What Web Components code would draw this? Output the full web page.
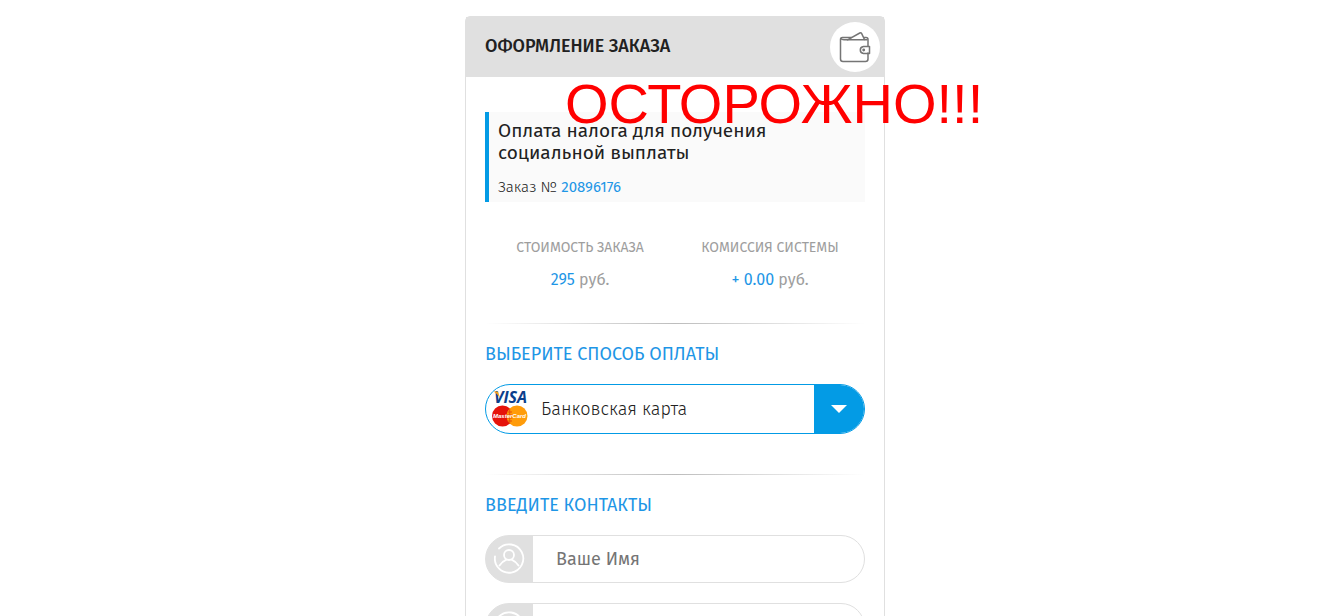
<!DOCTYPE html>
<html lang="ru">
<head>
<meta charset="utf-8">
<meta name="viewport" content="width=device-width, initial-scale=1">
<title>Оформление заказа</title>
<style>
    html, body { margin: 0; height: 100%; overflow: hidden; }
    body {
        box-sizing: border-box;
        padding-left: 24px;
        font-family: "Fira Sans", Roboto, "Noto Sans", sans-serif;
        color: #212121;
        background: #fff;
        --accent: #039be5;
        --link: #1e96e6;
        --line: #e0e0e0;
        --muted: #9e9e9e;
    }
</style>
</head>
<body>
<order-card heading="ОФОРМЛЕНИЕ ЗАКАЗА">
    <order-info number="20896176">Оплата налога для получения социальной выплаты</order-info>
    <order-totals>
        <order-sum caption="СТОИМОСТЬ ЗАКАЗА" value="295"></order-sum>
        <order-sum caption="КОМИССИЯ СИСТЕМЫ" value="+ 0.00"></order-sum>
    </order-totals>
    <soft-line></soft-line>
    <pay-method heading="ВЫБЕРИТЕ СПОСОБ ОПЛАТЫ"></pay-method>
    <soft-line></soft-line>
    <contact-form heading="ВВЕДИТЕ КОНТАКТЫ">
        <contact-field name="name" placeholder="Ваше Имя"></contact-field>
        <contact-field name="email" label="E-mail"></contact-field>
    </contact-form>
    <warning-note slot="over">ОСТОРОЖНО!!!</warning-note>
</order-card>

<script>
// every element fills its shadow root from render()
class BaseElement extends HTMLElement {
    constructor() {
        super();
        let template = document.createElement('template');
        template.innerHTML = this.render();
        this.attachShadow({mode: 'open'})
            .appendChild(template.content.cloneNode(true));
    }
    attr(name) {
        return this.getAttribute(name) || '';
    }
}

customElements.define('order-card',
class extends BaseElement {
    render() {
        return `
        <style>
            :host {
                display: block;
                position: relative;
                box-sizing: border-box;
                max-width: 420px;
                margin: 16px auto;
                border: 1px solid var(--line);
                border-radius: 5px;
            }
            header {
                display: flex;
                align-items: center;
                justify-content: space-between;
                box-sizing: border-box;
                height: 60px;
                padding: 0 4px 0 19px;
                background: var(--line);
            }
            h1 { margin: 0; padding-bottom: 2px; font-size: 18px; line-height: 24px; font-weight: 500; }
            .badge {
                display: flex;
                align-items: center;
                justify-content: center;
                width: 50px;
                height: 50px;
                border-radius: 50%;
                background: #fff;
            }
            main { padding: 35px 19px; }
        </style>
        <header>
            <h1>${this.attr('heading')}</h1>
            <span class="badge">
                <svg width="32" height="32" viewBox="0 0 32 32" fill="none" stroke="#757575" stroke-width="1.5" stroke-linejoin="round" stroke-linecap="round">
                    <path d="M29 15V8.500Q29 6.500 27 6.500H25M12.500 6.500H3.500Q1.500 6.500 1.500 8.500V28Q1.500 30.500 4 30.500H26.500Q29 30.500 29 28V22"/>
                    <path d="M2 7.500Q2.500 8.800 5 8.800H28"/>
                    <path d="M8.500 8.800L20.800 2Q22 1.400 22.700 2.700L25.500 8.500"/>
                    <path d="M30.500 15.500H24.500Q21.300 16 21.300 19Q21.300 22 24.500 22.500H30.500Z"/>
                    <circle cx="24.700" cy="19" r=".7"/>
                </svg>
            </span>
        </header>
        <main><slot></slot></main>
        <slot name="over"></slot>
        `;
    }
})

customElements.define('order-info',
class extends BaseElement {
    render() {
        return `
        <style>
            :host {
                display: block;
                padding: 8px 80px 4px 9px;
                border-left: 4px solid var(--accent);
                background: #fafafa;
            }
            p { margin: 0; }
            .title { font-size: 19px; line-height: 22px; }
            .number { margin-top: 12px; font-size: 15px; line-height: 22px; font-weight: 300; }
            b { color: var(--link); font-weight: 400; }
        </style>
        <p class="title"><slot></slot></p>
        <p class="number">Заказ № <b>${this.attr('number')}</b></p>
        `;
    }
})

customElements.define('order-totals',
class extends BaseElement {
    render() {
        return `
        <style>
            :host { display: grid; grid-template-columns: 1fr 1fr; margin: 35px 0 32px; }
        </style>
        <slot></slot>
        `;
    }
})

customElements.define('order-sum',
class extends BaseElement {
    render() {
        return `
        <style>
            :host { display: block; text-align: center; color: var(--muted); }
            p { margin: 0; }
            .caption { font-size: 14px; line-height: 22px; }
            .value { margin-top: 10px; font-size: 16px; line-height: 22px; }
            b { color: var(--link); font-weight: 400; }
        </style>
        <p class="caption">${this.attr('caption')}</p>
        <p class="value"><b>${this.attr('value')}</b> руб.</p>
        `;
    }
})

customElements.define('soft-line',
class extends BaseElement {
    render() {
        return `
        <style>
            :host {
                display: block;
                height: 1px;
                background: linear-gradient(to right, transparent, #bdbdbd, transparent);
            }
        </style>
        `;
    }
})

customElements.define('pay-method',
class extends BaseElement {
    render() {
        return `
        <style>
            :host { display: block; padding: 18px 0 40px; }
            label { display: block; margin-bottom: 18px; color: var(--link); font-size: 18px; line-height: 24px; }
            .box {
                display: grid;
                grid-template-columns: 1fr 50px;
                box-sizing: border-box;
                height: 50px;
                border: 1px solid var(--accent);
                border-radius: 25px;
                overflow: hidden;
            }
            .box > * { grid-row: 1; }
            .logo { grid-column: 1; align-self: center; margin-left: 6px; overflow: visible; }
            .arrow {
                grid-column: 2;
                display: flex;
                align-items: center;
                justify-content: center;
                background: var(--accent);
            }
            select {
                grid-column: 1 / 3;
                appearance: none;
                padding: 0 60px 0 55px;
                border: 0;
                outline: 0;
                background: transparent;
                color: inherit;
                font: 300 18px/24px "Fira Sans", Roboto, "Noto Sans", sans-serif;
            }
        </style>
        <label for="method">${this.attr('heading')}</label>
        <div class="box">
            <svg class="logo" width="38" height="38" viewBox="0 0 38 38">
                <circle cx="10.500" cy="26" r="10.500" fill="#e5130b"/>
                <circle cx="25" cy="26" r="10.500" fill="#ff9c0a"/>
                <path d="M17.700 19V34M15.500 22H20M15 25H20.500M15 28H20.500M15.500 31H20" stroke="#e5530b" stroke-width="1"/>
                <text x="2" y="13" font-family="Open Sans, sans-serif" font-size="16" font-weight="700" font-style="italic" fill="#0b3f8c">VISA</text>
                <path d="M1.500 1.500H6L8 8Q6 4 1.500 1.500Z" fill="#f5a11c"/>
                <text x="1" y="28" font-family="Liberation Sans, sans-serif" font-size="6" font-weight="700" font-style="italic" fill="#fff">MasterCard</text>
            </svg>
            <span class="arrow">
                <svg width="16" height="8" viewBox="0 0 16 8"><path d="M0 0H16L8 8Z" fill="#fff"/></svg>
            </span>
            <select id="method">
                <option>Банковская карта</option>
            </select>
        </div>
        `;
    }
})

customElements.define('contact-form',
class extends BaseElement {
    render() {
        return `
        <style>
            :host { display: block; padding-top: 18px; }
            h2 { margin: 0 0 18px; color: var(--link); font-size: 18px; line-height: 24px; font-weight: 400; }
            form { display: grid; gap: 20px; }
        </style>
        <h2>${this.attr('heading')}</h2>
        <form><slot></slot></form>
        `;
    }
})

customElements.define('contact-field',
class extends BaseElement {
    render() {
        return `
        <style>
            :host {
                display: flex;
                box-sizing: border-box;
                height: 48px;
                border: 1px solid var(--line);
                border-radius: 24px;
                overflow: hidden;
                background: linear-gradient(to right, var(--line) 48px, transparent 48px) border-box;
            }
            label {
                flex: none;
                display: flex;
                align-items: center;
                justify-content: center;
                width: 48px;
            }
            input {
                flex: 1;
                min-width: 0;
                padding: 0 22px;
                border: 0;
                outline: 0;
                background: transparent;
                color: inherit;
                font: 400 18px/24px "Fira Sans", Roboto, "Noto Sans", sans-serif;
            }
            input::placeholder { color: #757575; }
        </style>
        <label for="field">
            <svg width="32" height="32" viewBox="0 0 32 32" fill="none" stroke="#fff" stroke-width="1.800" stroke-linecap="round">
                <path d="M5 5.500A14.200 14.200 0 1 1 1 13.500"/>
                <circle cx="15" cy="12" r="5"/>
                <path d="M5.500 22.500Q8 18.500 12 16.800M18 16.800Q22 18.500 24.500 22.500"/>
            </svg>
        </label>
        <input id="field" name="${this.attr('name')}" aria-label="${this.attr('label') || this.attr('placeholder')}" placeholder="${this.attr('placeholder')}">
        `;
    }
})

customElements.define('warning-note',
class extends BaseElement {
    render() {
        return `
        <style>
            /* lies over the card and runs out past its right edge */
            :host {
                position: absolute;
                top: 55px;
                left: 99px;
                color: #f00;
                font: 56px/64px "Liberation Sans", Arial, sans-serif;
                white-space: nowrap;
            }
        </style>
        <slot></slot>
        `;
    }
})
</script>
</body>
</html>
